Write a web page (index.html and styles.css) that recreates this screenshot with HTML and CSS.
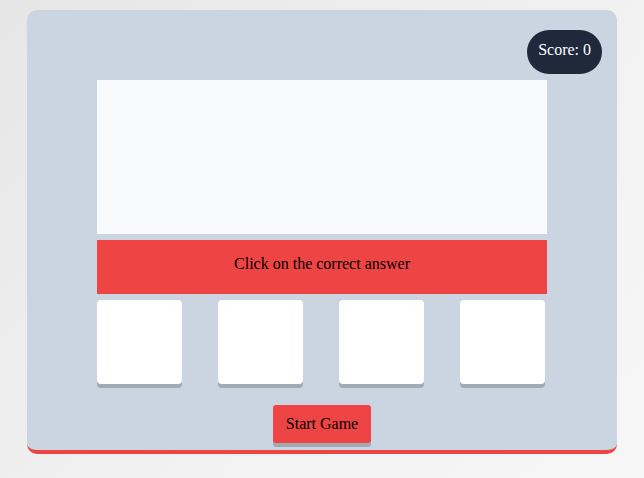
FILE: index.html
```html
<!DOCTYPE html>
<html>
<head>
<meta charset="utf-8">
<link rel="stylesheet" href="styles.css">
</head>
<body>
<div class="card">
  <div class="top">
    <div class="score">Score: 0</div>
  </div>
  <div class="game">
    <div class="screen"></div>
    <div class="prompt">Click on the correct answer</div>
    <div class="answers">
      <div class="answer"></div>
      <div class="answer"></div>
      <div class="answer"></div>
      <div class="answer"></div>
    </div>
    <div class="actions">
      <button class="start">Start Game</button>
    </div>
  </div>
</div>
</body>
</html>
```

FILE: styles.css
```css
html, body {
  margin: 0;
  padding: 0;
}
body {
  min-height: 478px;
  box-sizing: border-box;
  padding-top: 10px;
  background: linear-gradient(135deg, #e6e6e6 0%, #f2f2f2 60%, #f7f7f7 100%);
  font-family: "Liberation Serif", serif;
  font-size: 16px;
}
.card {
  width: 590px;
  margin: 0 auto;
  box-sizing: border-box;
  background: #cbd5e1;
  border-radius: 10px;
  border-bottom: 4px solid #ef4444;
  padding: 20px 15px 7px;
}
.top {
  display: flex;
  justify-content: flex-end;
}
.score {
  background: #1e293b;
  color: #ffffff;
  height: 44px;
  box-sizing: border-box;
  padding: 0 11px 4px;
  display: flex;
  align-items: center;
  border-radius: 22px;
  line-height: 18px;
}
.game {
  width: 450px;
  margin: 6px auto 0;
  display: flex;
  flex-direction: column;
  gap: 6px;
}
.screen {
  height: 154px;
  background: #f8fafc;
}
.prompt {
  height: 54px;
  box-sizing: border-box;
  padding-bottom: 6px;
  background: #ef4444;
  color: #000;
  display: flex;
  align-items: center;
  justify-content: center;
  line-height: 18px;
}
.answers {
  display: flex;
  justify-content: space-between;
  padding-right: 2px;
}
.answer {
  width: 85px;
  height: 84px;
  background: #ffffff;
  border-radius: 4px;
  box-shadow: 0 4px 0 rgba(0, 0, 0, 0.2);
}
.actions {
  display: flex;
  justify-content: center;
  margin-top: 15px;
}
.start {
  font-family: "Liberation Serif", serif;
  font-size: 16px;
  color: #000;
  background: #ef4444;
  border: none;
  border-radius: 3px;
  height: 38px;
  padding: 0 13px;
  line-height: 18px;
  box-shadow: 0 4px 0 rgba(0, 0, 0, 0.2);
}
```
